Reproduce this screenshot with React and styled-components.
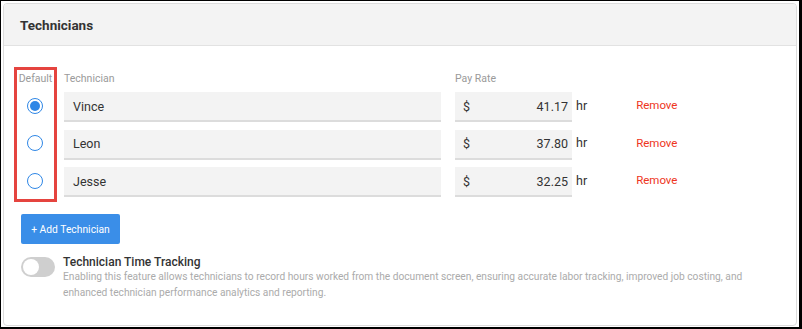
import React from "react";
import styled, { createGlobalStyle } from "styled-components";

const Global = createGlobalStyle`
  html, body { margin: 0; padding: 0; background: #fff; }
  body { font-family: Roboto, "Noto Sans", Arial, sans-serif; }
  * { box-sizing: border-box; }
`;

const Frame = styled.div`
  width: 802px;
  height: 329px;
  border: 1px solid #000;
  border-right-width: 3px;
  border-bottom-width: 2px;
  padding: 2px 2px 1px 2px;
  background: #fff;
`;

const Card = styled.div`
  height: 100%;
  border: 1px solid #dcdcdc;
  border-radius: 4px;
  overflow: hidden;
  background: #fff;
`;

const Header = styled.div`
  height: 42px;
  background: #f3f3f3;
  border-bottom: 1px solid #e2e2e2;
  display: flex;
  align-items: center;
  padding-left: 16px;
  padding-top: 1px;
`;

const Title = styled.h2`
  margin: 0;
  font-size: 13.5px;
  font-weight: 700;
  color: #333;
`;

const Body = styled.div`
  padding: 21px 0 0 17px;
`;

const Table = styled.div`
  display: flex;
  align-items: flex-start;
`;

const DefaultColumn = styled.div`
  margin-left: -7px;
  width: 43px;
  border: 3px solid #e5443f;
  display: flex;
  flex-direction: column;
  align-items: center;
  padding-bottom: 2px;
`;

const Label = styled.div`
  height: 22px;
  font-size: 10.5px;
  line-height: 16px;
  color: #9a9a9a;
  padding-top: 1px;
`;

const RadioCell = styled.div`
  height: 30px;
  margin-bottom: ${(p) => (p.last ? 0 : "7.5px")};
  display: flex;
  align-items: center;
  justify-content: center;
  padding-bottom: 3px;
  padding-right: 1px;
`;

const Radio = styled.span`
  width: 16px;
  height: 16px;
  border-radius: 50%;
  border: 1.5px solid #2f87e6;
  display: flex;
  align-items: center;
  justify-content: center;
  &::after {
    content: "";
    width: 10px;
    height: 10px;
    border-radius: 50%;
    background: ${(p) => (p.checked ? "#2f87e6" : "transparent")};
  }
`;

const Rows = styled.div`
  margin-left: 7px;
  padding-top: 3px;
  display: flex;
  flex-direction: column;
`;

const LabelRow = styled.div`
  display: flex;
`;

const NameLabel = styled(Label)`
  width: 377px;
`;

const PayLabel = styled(Label)`
  margin-left: 14px;
`;

const Row = styled.div`
  display: flex;
  align-items: center;
  height: 30px;
  margin-bottom: ${(p) => (p.last ? 0 : "7.5px")};
`;

const Field = styled.div`
  height: 30px;
  background: #f3f3f3;
  border-bottom: 2px solid #dcdcdc;
  display: flex;
  align-items: center;
  font-size: 12.5px;
  color: #333;
`;

const NameField = styled(Field)`
  width: 377px;
  padding-left: 9px;
`;

const PayField = styled(Field)`
  width: 117px;
  margin-left: 14px;
  padding: 0 4px 0 8px;
  justify-content: space-between;
`;

const Unit = styled.span`
  margin-left: 4px;
  font-size: 12.5px;
  color: #333;
  padding-bottom: 4px;
`;

const Remove = styled.a`
  margin-left: 49px;
  font-size: 11.5px;
  color: #ee3522;
  cursor: pointer;
  padding-bottom: 4px;
`;

const AddButton = styled.button`
  display: block;
  margin: 12px 0 0 0;
  width: 99px;
  height: 30px;
  border: none;
  border-radius: 2px;
  background: #3a8ee8;
  color: #fff;
  font-family: inherit;
  font-size: 10.3px;
  padding: 0;
`;

const ToggleRow = styled.div`
  display: flex;
  align-items: flex-start;
  margin: 12px 0 0 0;
`;

const Toggle = styled.span`
  width: 34px;
  height: 20px;
  border-radius: 10px;
  background: #cfcfcf;
  flex-shrink: 0;
  display: flex;
  align-items: center;
  padding-left: 2px;
  margin-top: 1px;
  &::after {
    content: "";
    width: 16px;
    height: 16px;
    border-radius: 50%;
    background: #fff;
  }
`;

const ToggleText = styled.div`
  margin-left: 8px;
`;

const ToggleTitle = styled.div`
  font-size: 12px;
  font-weight: 500;
  color: #333;
  line-height: 13px;
`;

const ToggleDesc = styled.div`
  width: 705px;
  font-size: 10.2px;
  line-height: 16px;
  color: #ababab;
`;

const techs = [
  { name: "Vince", rate: "41.17", def: true },
  { name: "Leon", rate: "37.80" },
  { name: "Jesse", rate: "32.25" },
];

export default function App() {
  return (
    <>
      <Global />
      <Frame>
        <Card>
          <Header>
            <Title>Technicians</Title>
          </Header>
          <Body>
            <Table>
              <DefaultColumn>
                <Label>Default</Label>
                {techs.map((t, i) => (
                  <RadioCell key={t.name} last={i === techs.length - 1}>
                    <Radio checked={t.def} />
                  </RadioCell>
                ))}
              </DefaultColumn>
              <Rows>
                <LabelRow>
                  <NameLabel>Technician</NameLabel>
                  <PayLabel>Pay Rate</PayLabel>
                </LabelRow>
                {techs.map((t, i) => (
                  <Row key={t.name} last={i === techs.length - 1}>
                    <NameField>{t.name}</NameField>
                    <PayField>
                      <span>$</span>
                      <span>{t.rate}</span>
                    </PayField>
                    <Unit>hr</Unit>
                    <Remove>Remove</Remove>
                  </Row>
                ))}
              </Rows>
            </Table>
            <AddButton>+ Add Technician</AddButton>
            <ToggleRow>
              <Toggle />
              <ToggleText>
                <ToggleTitle>Technician Time Tracking</ToggleTitle>
                <ToggleDesc>
                  Enabling this feature allows technicians to record hours worked from the document screen, ensuring accurate labor tracking, improved job costing, and enhanced technician performance analytics and reporting.
                </ToggleDesc>
              </ToggleText>
            </ToggleRow>
          </Body>
        </Card>
      </Frame>
    </>
  );
}
